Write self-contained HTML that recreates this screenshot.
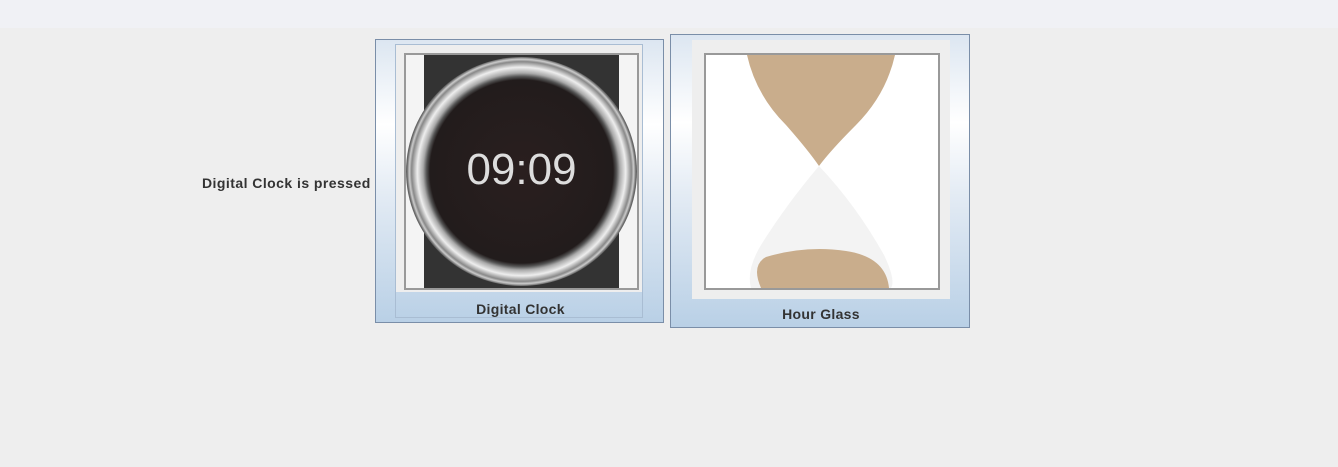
<!DOCTYPE html>
<html><head><style>
body{margin:0;width:1338px;height:467px;background:#eeeeee;position:relative;overflow:hidden;font-family:"Liberation Sans",sans-serif;}
.top{position:absolute;left:0;top:0;width:1338px;height:28px;background:#f0f1f5;}
.btn{position:absolute;box-sizing:border-box;border:1px solid #7a8ea8;background:linear-gradient(#dce6f1 0%,#ffffff 30%,#e3ebf4 55%,#b9d0e6 100%);}
.lbl{position:absolute;font-weight:bold;font-size:14px;color:#333;letter-spacing:0.3px;}
</style></head><body>
<div class="top"></div>
<div class="lbl" style="left:202px;top:175px;letter-spacing:0.45px;">Digital Clock is pressed</div>
<div class="btn" style="left:375px;top:39px;width:289px;height:284px;">
 <div style="position:absolute;left:19px;top:4px;width:248px;height:274px;border:1px solid #a9bdd3;box-sizing:border-box;"></div>
 <div style="position:absolute;left:20px;top:5px;width:246px;height:247px;background:#eee;"></div>
 <div style="position:absolute;left:28px;top:13px;width:235px;height:237px;border:2px solid #999;box-sizing:border-box;background:#f4f4f4;overflow:hidden;">
  <div style="position:absolute;left:18px;top:-10px;width:195px;height:260px;background:#333;"></div>
  <div style="position:absolute;left:0px;top:2px;width:231px;height:229px;border-radius:50%;background:radial-gradient(circle closest-side,#2a1f1f 0%,#221c1c 80%,#555 83%,#aaa 86%,#eee 91%,#888 96%,#ccc 98%,#666 100%);"></div>
  <div style="position:absolute;left:0;top:90px;width:231px;text-align:center;color:#ddd;font-size:44px;">09:09</div>
 </div>
 <div class="lbl" style="left:0;width:289px;text-align:center;top:261px;">Digital Clock</div>
</div>
<div class="btn" style="left:670px;top:34px;width:300px;height:294px;">
 <div style="position:absolute;left:21px;top:5px;width:258px;height:259px;background:#eeeeee;"></div>
 <div style="position:absolute;left:33px;top:18px;width:236px;height:237px;border:2px solid #999;box-sizing:border-box;background:#fff;overflow:hidden;">
  <svg width="232" height="233" viewBox="0 0 232 233">
   <path d="M113 111 Q150 150 178 200 Q190 225 185 233 L45 233 Q40 215 55 190 Q80 150 113 111Z" fill="#f3f3f3"/>
   <path d="M41 0 L189 0 Q180 40 150 70 Q125 95 113 111 Q102 95 80 70 Q50 40 41 0Z" fill="#c9ad8c"/>
   <path d="M55 233 Q45 210 60 202 Q100 190 140 196 Q180 202 183 233Z" fill="#c9ad8c"/>
  </svg>
 </div>
 <div class="lbl" style="left:0;width:300px;text-align:center;top:271px;">Hour Glass</div>
</div>
</body></html>
